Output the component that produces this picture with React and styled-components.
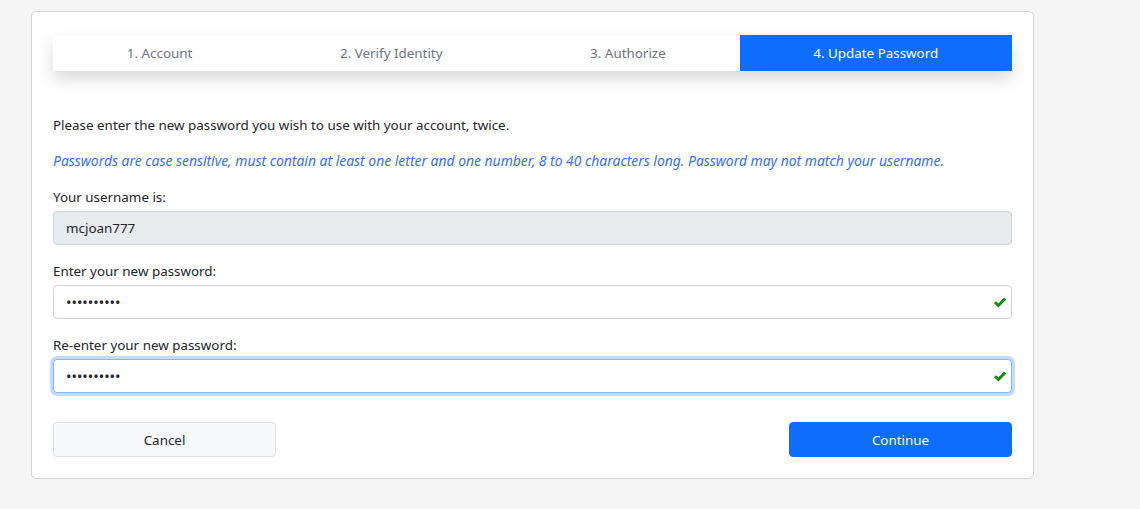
import React from "react";
import styled, { createGlobalStyle } from "styled-components";

const GlobalStyle = createGlobalStyle`
  body {
    margin: 0;
    background: #f5f5f5;
    font-family: "Noto Sans", "Liberation Sans", sans-serif;
    font-size: 13.4px;
    color: #212529;
  }
`;

const Page = styled.div`
  padding: 11px 0 0 31px;
  min-height: 498px;
`;

const Card = styled.div`
  width: 1003px;
  box-sizing: border-box;
  background: #fff;
  border: 1px solid #d4d4d4;
  border-radius: 5px;
  padding: 23px 21px 21px;
`;

const Steps = styled.div`
  display: flex;
  height: 36px;
  background: #fff;
  box-shadow: 0 8px 16px rgba(0, 0, 0, 0.15);
`;

const Step = styled.div`
  flex: 1 1 auto;
  display: flex;
  align-items: center;
  justify-content: center;
  color: ${(p) => (p.$active ? "#fff" : "#6c757d")};
  background: ${(p) => (p.$active ? "#0d6efd" : "transparent")};
`;

const Intro = styled.p`
  margin: 44px 0 14px;
  line-height: 21px;
`;

const Hint = styled.p`
  margin: 0 0 15px;
  line-height: 21px;
  font-size: 13.9px;
  font-style: italic;
  color: #3570f5;
`;

const Label = styled.label`
  display: block;
  line-height: 21px;
  padding-top: 1px;
  margin-bottom: 3px;
`;

const Field = styled.div`
  position: relative;
  margin-bottom: 15px;
`;

const Input = styled.input`
  display: block;
  width: 100%;
  height: 34px;
  box-sizing: border-box;
  padding: 0 36px 0 12px;
  font: inherit;
  font-size: ${(p) => (p.type === "password" ? "14.5px" : "inherit")};
  color: #212529;
  background: ${(p) => (p.disabled ? "#e9ecef" : "#fff")};
  border: 1px solid ${(p) => (p.$focus ? "#86b7fe" : "#ced4da")};
  border-radius: 4px;
  outline: none;
  box-shadow: ${(p) => (p.$focus ? "0 0 0 3px rgba(13, 110, 253, 0.25)" : "none")};
`;

const Check = styled.svg`
  position: absolute;
  right: 6px;
  top: 11px;
  width: 12px;
  height: 12px;
`;

const Actions = styled.div`
  display: flex;
  justify-content: space-between;
  margin-top: 29px;
`;

const Button = styled.button`
  width: 223px;
  height: 35px;
  font: inherit;
  border-radius: 4px;
  border: 1px solid ${(p) => (p.$primary ? "#0d6efd" : "#dee2e6")};
  background: ${(p) => (p.$primary ? "#0d6efd" : "#f8f9fa")};
  color: ${(p) => (p.$primary ? "#fff" : "#212529")};
`;

const ValidIcon = () => (
  <Check viewBox="0 0 12 12">
    <path d="M1 6.2 L4.4 9.5 L11.2 2.4" fill="none" stroke="#0a8f0a" strokeWidth="2.9" />
  </Check>
);

const steps = ["1. Account", "2. Verify Identity", "3. Authorize", "4. Update Password"];

export default function App() {
  return (
    <Page>
      <GlobalStyle />
      <Card>
        <Steps>
          {steps.map((s, i) => (
            <Step key={s} $active={i === 3}>{s}</Step>
          ))}
        </Steps>
        <Intro>Please enter the new password you wish to use with your account, twice.</Intro>
        <Hint>
          Passwords are case sensitive, must contain at least one letter and one number, 8 to 40
          characters long. Password may not match your username.
        </Hint>
        <Label>Your username is:</Label>
        <Field>
          <Input value="mcjoan777" disabled readOnly />
        </Field>
        <Label>Enter your new password:</Label>
        <Field>
          <Input type="password" value="abcdefghij" readOnly />
          <ValidIcon />
        </Field>
        <Label>Re-enter your new password:</Label>
        <Field>
          <Input type="password" value="abcdefghij" readOnly $focus />
          <ValidIcon />
        </Field>
        <Actions>
          <Button>Cancel</Button>
          <Button $primary>Continue</Button>
        </Actions>
      </Card>
    </Page>
  );
}
